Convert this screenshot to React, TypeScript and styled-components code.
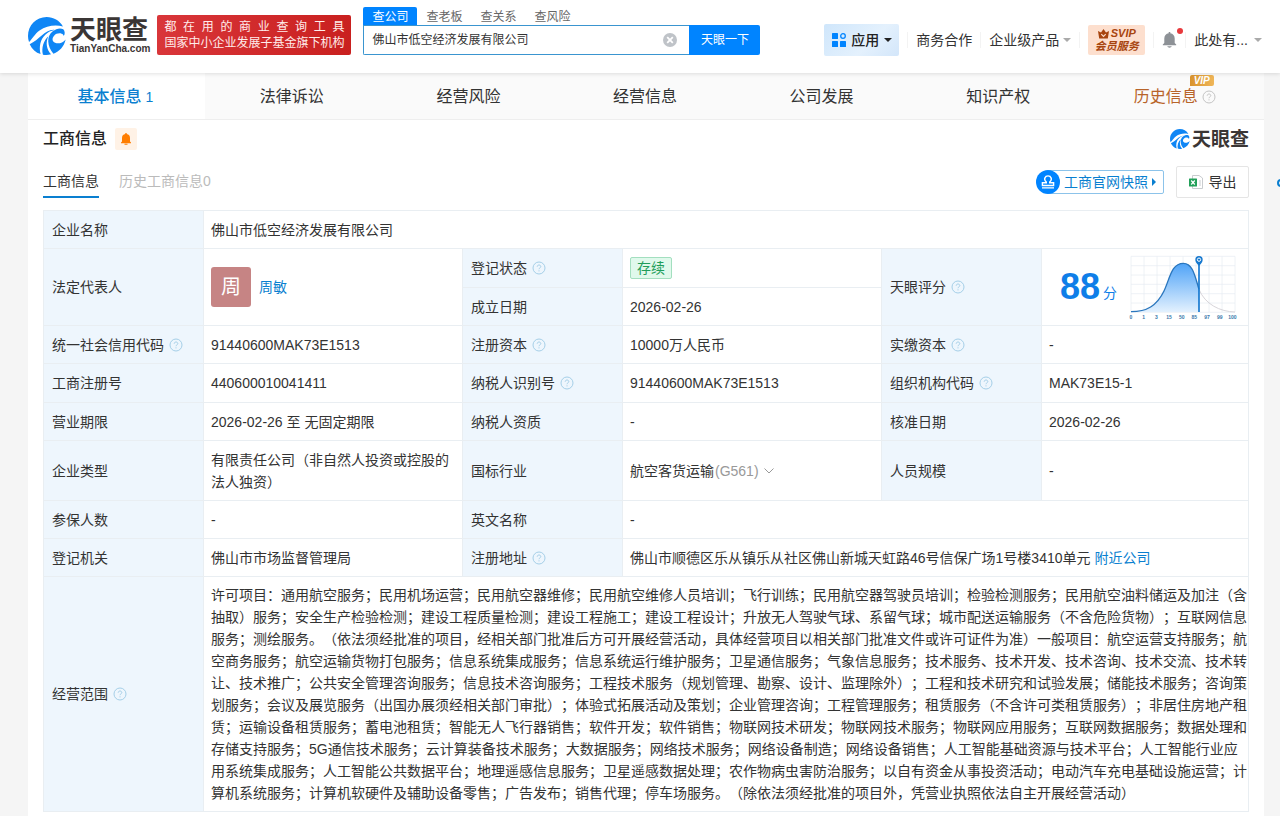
import React, { useState } from "react";
import styled, { createGlobalStyle } from "styled-components";

const blue = "#0084ff";
const link = "#0a7fd0";
const line = "#e9eef2";

const GlobalStyle = createGlobalStyle`
  * { box-sizing: border-box; }
  body {
    margin: 0;
    background: #f5f5f5;
    color: #333;
    font-family: "Liberation Sans", "Noto Sans CJK SC", sans-serif;
    font-size: 14px;
    line-height: 22px;
    text-spacing-trim: space-all;
  }
  button, input { font: inherit; color: inherit; }
  button { border: 0; padding: 0; background: none; cursor: pointer; }
  a { color: inherit; text-decoration: none; }
  svg { display: block; flex: none; }
`;

const Page = styled.div`
  display: flex;
  flex-direction: column;
  min-height: 100vh;
`;

/* ---------- header ---------- */

const Header = styled.header`
  position: relative;
  z-index: 2;
  display: flex;
  align-items: flex-start;
  height: 73px;
  padding: 0 18px 0 28px;
  background: #fff;
  box-shadow: 0 1px 4px rgba(0, 0, 0, 0.12);
`;

const Brand = styled.a`
  display: flex;
  align-items: center;
  gap: 4px;
  margin-top: 17px;
`;

const BrandText = styled.span`
  display: flex;
  flex-direction: column;
  color: #3b3635;
`;

const BrandName = styled.strong<{ $size: number }>`
  font-size: ${(p) => p.$size}px;
  line-height: ${(p) => p.$size}px;
  font-weight: 700;
`;

const BrandDomain = styled.span`
  font-size: 10px;
  line-height: 12px;
  font-weight: 700;
`;

const Slogan = styled.div`
  width: 194px;
  height: 40px;
  margin: 15px 12px 0 7px;
  padding: 4px 7px;
  border-radius: 2px;
  background: linear-gradient(90deg, #d9363a, #c9201f);
  color: #ffeceb;
  font-size: 12px;
  line-height: 16px;
  white-space: nowrap;
`;

const SloganLine = styled.div`
  text-align: justify;
  text-align-last: justify;
`;

const Search = styled.form`
  display: flex;
  flex-direction: column;
  flex: 0 1 397px;
  margin-top: 7px;
`;

const SearchTabs = styled.div`
  display: flex;
`;

const SearchTab = styled.button<{ $active?: boolean }>`
  height: 18px;
  padding: 0 9px;
  border-radius: 2px 2px 0 0;
  background: ${(p) => (p.$active ? blue : "transparent")};
  color: ${(p) => (p.$active ? "#fff" : "#666")};
  font-size: 12px;
  line-height: 20px;
`;

const SearchRow = styled.div`
  display: flex;
  height: 30px;
`;

const SearchField = styled.label`
  display: flex;
  flex: 1;
  align-items: center;
  min-width: 0;
  padding: 0 12px 0 8px;
  border: 1px solid #3a95d0;
  border-right: 0;
  border-radius: 0 0 0 2px;
`;

const SearchInput = styled.input`
  flex: 1;
  min-width: 0;
  padding: 0;
  border: 0;
  outline: 0;
  background: none;
  font-size: 12px;
`;

const SearchButton = styled.button`
  width: 71px;
  border-radius: 0 2px 2px 0;
  background: ${blue};
  color: #fff;
  font-size: 12px;
`;

const Nav = styled.nav`
  display: flex;
  align-items: center;
  gap: 8px;
  height: 32px;
  margin: 24px 0 0 auto;
  white-space: nowrap;
`;

const NavRule = styled.span`
  width: 1px;
  height: 16px;
  background: #f3f3f3;
`;

const NavButton = styled.button<{ $gap: number }>`
  display: flex;
  align-items: center;
  gap: ${(p) => p.$gap}px;
`;

const AppsButton = styled.button`
  display: flex;
  align-items: center;
  gap: 5px;
  width: 75px;
  height: 32px;
  padding: 0 8px;
  border-radius: 2px;
  background: linear-gradient(135deg, #cfe6fb, #e4f1fd 60%, #d3e6fa);
  color: #222;
  font-weight: 500;
`;

const Svip = styled.a`
  display: flex;
  flex-direction: column;
  align-items: center;
  width: 57px;
  height: 30px;
  padding-top: 2px;
  border-radius: 2px;
  background: #fddfce;
  color: #a8450f;
  font-size: 11px;
  line-height: 13px;
  font-weight: 700;
  font-style: italic;
`;

const SvipTop = styled.span`
  display: flex;
  align-items: center;
  gap: 2px;
`;

const Notice = styled.button`
  position: relative;
`;

const NoticeDot = styled.span`
  position: absolute;
  top: -4px;
  right: -6px;
  width: 6px;
  height: 6px;
  border-radius: 50%;
  background: #e8393c;
`;

/* ---------- company body ---------- */

const Main = styled.main`
  display: flex;
  flex: 1;
  flex-direction: column;
  margin: 0 16px 0 28px;
  background: #fff;
`;

const Tabs = styled.nav`
  display: grid;
  grid-template-columns: repeat(7, 1fr);
  height: 47px;
  border-bottom: 1px solid #eee;
  background: #fafafa;
`;

const Tab = styled.a<{ $active?: boolean; $gold?: boolean }>`
  display: flex;
  align-items: center;
  justify-content: center;
  gap: 4px;
  padding: 2px 2px 0 0;
  background: ${(p) => (p.$active ? "#fff" : "transparent")};
  color: ${(p) => (p.$active ? link : p.$gold ? "#b8642a" : "#333")};
  font-size: 16px;
  font-weight: ${(p) => (p.$active ? 500 : 400)};
`;

const TabCount = styled.span`
  font-size: 14px;
  font-weight: 400;
`;

const TabLabel = styled.span`
  position: relative;
`;

const VipFlag = styled.span`
  position: absolute;
  top: -11px;
  right: -16px;
  width: 24px;
  height: 11px;
  border-radius: 2px 2px 2px 0;
  background: linear-gradient(90deg, #d9932d, #efb659);
  color: #fff;
  font-size: 10px;
  line-height: 11px;
  font-weight: 700;
  font-style: italic;
  text-align: center;
`;

const Panel = styled.section`
  padding: 0 15px;
`;

const TitleRow = styled.div`
  display: flex;
  align-items: center;
  height: 38px;
`;

const Title = styled.h2`
  margin: 0;
  font-size: 16px;
  font-weight: 500;
  color: #222;
`;

const Follow = styled.button`
  display: grid;
  place-items: center;
  width: 22px;
  height: 22px;
  margin-left: 8px;
  border-radius: 2px;
  background: #fff2e6;
`;

const PanelBrand = styled.span`
  display: flex;
  align-items: center;
  gap: 2px;
  margin-left: auto;
  color: #3b3635;
`;

const ToolRow = styled.div`
  display: flex;
  align-items: center;
  height: 32px;
  margin: 8px 0 12px;
`;

const SubTab = styled.button<{ $active?: boolean }>`
  height: 32px;
  margin-right: 20px;
  border-bottom: 2px solid ${(p) => (p.$active ? link : "transparent")};
  color: ${(p) => (p.$active ? "#333" : "#bbb")};
`;

const Snapshot = styled.button`
  display: flex;
  align-items: center;
  height: 24px;
  margin: 0 12px 0 auto;
  color: ${link};
`;

const SnapshotIcon = styled.span`
  z-index: 1;
  display: grid;
  place-items: center;
  width: 24px;
  height: 24px;
  margin-right: -12px;
  border-radius: 50%;
  background: ${blue};
`;

const SnapshotLabel = styled.span`
  display: flex;
  align-items: center;
  gap: 4px;
  height: 24px;
  padding: 0 7px 0 15px;
  border: 1px solid #8cc3ea;
  border-radius: 2px;
`;

const Export = styled.button`
  display: flex;
  align-items: center;
  justify-content: center;
  gap: 6px;
  width: 73px;
  height: 32px;
  border: 1px solid #e5e5e5;
  border-radius: 2px;
`;

const InfoTable = styled.table`
  width: 100%;
  border-collapse: collapse;
  table-layout: fixed;
`;

const LabelCol = styled.col`
  width: 160px;
`;

const ScoreCol = styled.col`
  width: 207px;
`;

const Row = styled.tr<{ $h: number }>`
  height: ${(p) => p.$h}px;
`;

const Label = styled.th`
  padding: 7px 8px;
  border: 1px solid ${line};
  background: #eef6fd;
  font-weight: 400;
  text-align: left;
`;

const LabelInner = styled.span`
  display: flex;
  align-items: center;
  gap: 5px;
`;

const Value = styled.td<{ $flush?: boolean }>`
  padding: ${(p) => (p.$flush ? "0" : "7px 0 7px 7px")};
  border: 1px solid ${line};
`;

const Person = styled.a`
  display: flex;
  align-items: center;
  gap: 8px;
  color: ${link};
`;

const Avatar = styled.span`
  width: 40px;
  height: 40px;
  border-radius: 3px;
  background: #c68484;
  color: #fff;
  font-size: 20px;
  line-height: 40px;
  text-align: center;
`;

const Status = styled.span`
  display: block;
  width: 42px;
  height: 22px;
  border: 1px solid #a3dfbf;
  border-radius: 2px;
  background: #e0f9ec;
  color: #1f9d5b;
  line-height: 20px;
  text-align: center;
`;

const Industry = styled.span`
  display: flex;
  align-items: center;
`;

const Code = styled.span`
  margin: 0 5px 0 1px;
  color: #999;
`;

const Nearby = styled.a`
  margin-left: 4px;
  color: ${link};
`;

const Score = styled.div`
  display: flex;
  align-items: center;
  padding-left: 18px;
  color: #0f7ee8;
`;

const ScoreNumber = styled.strong`
  margin-right: 3px;
  font-size: 36px;
  line-height: 40px;
`;

const ScoreUnit = styled.span`
  margin: 12px 11px 0 0;
`;

const SideHandle = styled.button`
  position: fixed;
  top: 179px;
  right: -5px;
  width: 8px;
  height: 8px;
  border: 2px solid ${link};
  border-radius: 50%;
`;

/* ---------- drawings ---------- */

const Swirl = ({ size }: { size: number }) => (
  <svg width={size} height={size} viewBox="0 0 112 112" aria-hidden="true">
    <path
      fill="#0f86f5"
      d="M103 28C93 10 75 0 55 0 24 0 0 25 0 56c0 6 1 12 3 18 9-8 17-24 31-34C54 26 80 22 103 28Z"
    />
    <path
      fill="#0f86f5"
      d="M5 80c7 15 18 25 32 29-5-21-1-43 14-57 8-8 17-12 27-14C49 36 34 68 5 80Z"
    />
    <path fill="#0f86f5" d="M44 111c8 1 16 1 24-1-13-14-17-33-8-53-14 13-21 34-16 54Z" />
    <path
      fill="#0f86f5"
      d="M75 108c18-7 31-21 36-42-9 11-22 14-31 10-9-4-10-14-3-21 5-6 14-8 22-6 4 1 6 4 6 7 5-5 4-15-1-20-9-5-21-2-31 6-19 15-17 44 2 66Z"
    />
  </svg>
);

const Caret = ({ color }: { color: string }) => (
  <svg width="8" height="5" viewBox="0 0 8 5" aria-hidden="true">
    <path d="M0 0h8L4 4z" fill={color} />
  </svg>
);

const Help = ({ color = "#a5cfe8" }: { color?: string }) => (
  <svg width="14" height="14" viewBox="0 0 14 14" fill="none" stroke={color} aria-hidden="true">
    <circle cx="7" cy="7" r="6" />
    <path d="M5.2 5.7c0-1 .8-1.7 1.8-1.7s1.8.7 1.8 1.6c0 1.2-1.8 1.3-1.8 2.6M7 9.3v1.1" />
  </svg>
);

const ClearIcon = () => (
  <svg width="14" height="14" viewBox="0 0 14 14" aria-hidden="true">
    <circle cx="7" cy="7" r="7" fill="#bfc3c8" />
    <path d="M4.2 4.2l5.6 5.6M9.8 4.2L4.2 9.8" stroke="#fff" strokeWidth="1.8" />
  </svg>
);

const AppsIcon = () => (
  <svg width="14" height="14" viewBox="0 0 14 14" fill={blue} aria-hidden="true">
    <rect width="6" height="6" rx=".6" />
    <rect y="8" width="6" height="6" rx=".6" />
    <rect x="8" y="8" width="6" height="6" rx=".6" />
    <circle cx="11" cy="3" r="2.3" fill="none" stroke={blue} strokeWidth="1.3" />
  </svg>
);

const Crown = () => (
  <svg width="11" height="10" viewBox="0 0 11 10" aria-hidden="true">
    <path d="M0 2l3 1.6L5.5 0 8 3.6 11 2 9.8 9.5H1.2z" fill="#a8450f" />
    <path d="M3.3 5.2l2.2 2.2 2.2-2.2" fill="none" stroke="#fddfce" strokeWidth="1.2" />
  </svg>
);

const NavBell = () => (
  <svg width="15" height="16" viewBox="0 0 15 16" fill="#8d9196" aria-hidden="true">
    <path d="M6.7 0h1.6v1.3C11 1.7 12.7 3.7 12.7 6.5V11l1.5 1.5v.7H.8v-.7L2.3 11V6.500C2.300 3.700 4 1.700 6.700 1.300z" />
    <path d="M5.300 14.300h4.400c-.4 1-1.200 1.400-2.200 1.400s-1.800-.4-2.200-1.400z" />
  </svg>
);

const FollowBell = () => (
  <svg width="10" height="12" viewBox="0 0 10 12" fill="#ff7d00" aria-hidden="true">
    <path d="M4.300 0h1.400v.9C7.900 1.200 9 2.800 9 5v3.500l1 1v.7H0v-.7l1-1V5C1 2.800 2.100 1.200 4.300.9zM3.500 10.700h3v1h-3z" />
  </svg>
);

const Stamp = () => (
  <svg width="14" height="14" viewBox="0 0 14 14" fill="none" stroke="#fff" strokeWidth="1.400" aria-hidden="true">
    <path d="M5.300 7C3.900 5.800 3.300 4.300 3.900 2.900 4.400 1.500 5.600.9 7 .9s2.600.6 3.100 2C10.700 4.300 10.100 5.800 8.700 7v.8h3.900v2.700H1.400V7.800h3.900zM1 12.900h12" />
  </svg>
);

const ExcelIcon = () => (
  <svg width="14" height="14" viewBox="0 0 14 14" aria-hidden="true">
    <path d="M3.500.5H10L13.500 3v10.500h-10z" fill="#fff" stroke="#c9cccf" />
    <path d="M10 6h2M10 8h2M10 10h2" stroke="#c9cccf" />
    <rect y="3.500" width="8" height="8" rx=".5" fill="#22a05a" />
    <path d="M2.200 5.500l3.600 4M5.800 5.500l-3.600 4" stroke="#fff" strokeWidth="1.200" />
  </svg>
);

const Chevron = () => (
  <svg width="10" height="6" viewBox="0 0 10 6" fill="none" stroke="#999" aria-hidden="true">
    <path d="M.5.500L5 5 9.500.500" />
  </svg>
);

const ticks = ["0", "1", "3", "15", "50", "85", "97", "99", "100"];

const ScoreChart = () => (
  <svg width="111" height="68" viewBox="24 6 333 204" role="img" aria-label="天眼评分分布">
    <defs>
      <linearGradient id="bell" x1="0" y1="0" x2="0" y2="1">
        <stop offset="0" stopColor="#4fa3f7" />
        <stop offset="1" stopColor="#e3f1fe" />
      </linearGradient>
    </defs>
    <g stroke="#e6ecf2" strokeWidth="2">
      {ticks.map((t, i) => (
        <path key={t} d={`M${33 + i * 39} 16V183`} />
      ))}
      {[0, 1, 2, 3, 4, 5, 6].map((i) => (
        <path key={i} d={`M33 ${16 + i * 28}H345`} />
      ))}
    </g>
    <path d="M33 182C80 182 110 165 132 120 150 82 154 37 190 37c28 0 34 35 47 78v68H33z" fill="url(#bell)" />
    <path d="M237 115C255 160 300 182 345 183" fill="none" stroke="#d8d5da" strokeWidth="3" />
    <path
      d="M33 182C80 182 110 165 132 120 150 82 154 37 190 37c28 0 34 35 47 78"
      fill="none"
      stroke="#2a76bd"
      strokeWidth="4"
    />
    <path d="M237 34V183" stroke="#1578cf" strokeWidth="5" />
    <path d="M237 44c-7-7-11-11-11-18a11 11 0 0 1 22 0c0 7-4 11-11 18z" fill="#1578cf" />
    <circle cx="237" cy="26" r="5" fill="#1578cf" stroke="#fff" strokeWidth="3" />
    <g fill="#3a78ab" fontSize="15" fontWeight="700" textAnchor="middle">
      {ticks.map((t, i) => (
        <text key={t} x={33 + i * 38} y="204">
          {t}
        </text>
      ))}
    </g>
  </svg>
);

/* ---------- content ---------- */

const Field = ({ children, help, rowSpan }: { children: string; help?: boolean; rowSpan?: number }) => (
  <Label scope="row" rowSpan={rowSpan}>
    <LabelInner>
      {children}
      {help && <Help />}
    </LabelInner>
  </Label>
);

const scopeText =
  "许可项目：通用航空服务；民用机场运营；民用航空器维修；民用航空维修人员培训；飞行训练；民用航空器驾驶员培训；检验检测服务；民用航空油料储运及加注（含抽取）服务；安全生产检验检测；建设工程质量检测；建设工程施工；建设工程设计；升放无人驾驶气球、系留气球；城市配送运输服务（不含危险货物）；互联网信息服务；测绘服务。（依法须经批准的项目，经相关部门批准后方可开展经营活动，具体经营项目以相关部门批准文件或许可证件为准）一般项目：航空运营支持服务；航空商务服务；航空运输货物打包服务；信息系统集成服务；信息系统运行维护服务；卫星通信服务；气象信息服务；技术服务、技术开发、技术咨询、技术交流、技术转让、技术推广；公共安全管理咨询服务；信息技术咨询服务；工程技术服务（规划管理、勘察、设计、监理除外）；工程和技术研究和试验发展；储能技术服务；咨询策划服务；会议及展览服务（出国办展须经相关部门审批）；体验式拓展活动及策划；企业管理咨询；工程管理服务；租赁服务（不含许可类租赁服务）；非居住房地产租赁；运输设备租赁服务；蓄电池租赁；智能无人飞行器销售；软件开发；软件销售；物联网技术研发；物联网技术服务；物联网应用服务；互联网数据服务；数据处理和存储支持服务；5G通信技术服务；云计算装备技术服务；大数据服务；网络技术服务；网络设备制造；网络设备销售；人工智能基础资源与技术平台；人工智能行业应用系统集成服务；人工智能公共数据平台；地理遥感信息服务；卫星遥感数据处理；农作物病虫害防治服务；以自有资金从事投资活动；电动汽车充电基础设施运营；计算机系统服务；计算机软硬件及辅助设备零售；广告发布；销售代理；停车场服务。（除依法须经批准的项目外，凭营业执照依法自主开展经营活动）";

export default function App() {
  const [query, setQuery] = useState("佛山市低空经济发展有限公司");

  return (
    <Page>
      <GlobalStyle />
      <Header>
        <Brand href="#" aria-label="天眼查">
          <Swirl size={38} />
          <BrandText>
            <BrandName $size={26}>天眼查</BrandName>
            <BrandDomain>TianYanCha.com</BrandDomain>
          </BrandText>
        </Brand>
        <Slogan>
          <SloganLine>都在用的商业查询工具</SloganLine>
          <SloganLine>国家中小企业发展子基金旗下机构</SloganLine>
        </Slogan>
        <Search onSubmit={(e) => e.preventDefault()}>
          <SearchTabs>
            <SearchTab type="button" $active>查公司</SearchTab>
            <SearchTab type="button">查老板</SearchTab>
            <SearchTab type="button">查关系</SearchTab>
            <SearchTab type="button">查风险</SearchTab>
          </SearchTabs>
          <SearchRow>
            <SearchField>
              <SearchInput aria-label="搜索公司" value={query} onChange={(e) => setQuery(e.target.value)} />
              <button type="button" aria-label="清空" onClick={() => setQuery("")}>
                <ClearIcon />
              </button>
            </SearchField>
            <SearchButton type="submit">天眼一下</SearchButton>
          </SearchRow>
        </Search>
        <Nav>
          <AppsButton>
            <AppsIcon />
            应用
            <Caret color="#222" />
          </AppsButton>
          <NavRule />
          <a href="#">商务合作</a>
          <NavRule />
          <NavButton $gap={4}>
            企业级产品
            <Caret color="#aaa" />
          </NavButton>
          <NavRule />
          <Svip href="#">
            <SvipTop>
              <Crown />
              SVIP
            </SvipTop>
            会员服务
          </Svip>
          <NavRule />
          <Notice aria-label="消息">
            <NavBell />
            <NoticeDot />
          </Notice>
          <NavRule />
          <NavButton $gap={6}>
            此处有...
            <Caret color="#aaa" />
          </NavButton>
        </Nav>
      </Header>

      <Main>
        <Tabs>
          <Tab href="#" $active>
            基本信息
            <TabCount>1</TabCount>
          </Tab>
          <Tab href="#">法律诉讼</Tab>
          <Tab href="#">经营风险</Tab>
          <Tab href="#">经营信息</Tab>
          <Tab href="#">公司发展</Tab>
          <Tab href="#">知识产权</Tab>
          <Tab href="#" $gold>
            <TabLabel>
              历史信息
              <VipFlag>VIP</VipFlag>
            </TabLabel>
            <Help color="#c4c4c4" />
          </Tab>
        </Tabs>

        <Panel>
          <TitleRow>
            <Title>工商信息</Title>
            <Follow aria-label="关注">
              <FollowBell />
            </Follow>
            <PanelBrand>
              <Swirl size={20} />
              <BrandName as="span" $size={19}>天眼查</BrandName>
            </PanelBrand>
          </TitleRow>

          <ToolRow>
            <SubTab $active>工商信息</SubTab>
            <SubTab>历史工商信息0</SubTab>
            <Snapshot>
              <SnapshotIcon>
                <Stamp />
              </SnapshotIcon>
              <SnapshotLabel>
                工商官网快照
                <svg width="4" height="8" viewBox="0 0 4 8" aria-hidden="true">
                  <path d="M0 0l4 4-4 4z" fill={link} />
                </svg>
              </SnapshotLabel>
            </Snapshot>
            <Export>
              <ExcelIcon />
              导出
            </Export>
          </ToolRow>

          <InfoTable>
            <colgroup>
              <LabelCol />
              <col />
              <LabelCol />
              <col />
              <LabelCol />
              <ScoreCol />
            </colgroup>
            <tbody>
              <Row $h={38}>
                <Field>企业名称</Field>
                <Value colSpan={5}>佛山市低空经济发展有限公司</Value>
              </Row>
              <Row $h={39}>
                <Field rowSpan={2}>法定代表人</Field>
                <Value rowSpan={2}>
                  <Person href="#">
                    <Avatar>周</Avatar>
                    周敏
                  </Person>
                </Value>
                <Field help>登记状态</Field>
                <Value>
                  <Status>存续</Status>
                </Value>
                <Field help rowSpan={2}>天眼评分</Field>
                <Value rowSpan={2} $flush>
                  <Score>
                    <ScoreNumber>88</ScoreNumber>
                    <ScoreUnit>分</ScoreUnit>
                    <ScoreChart />
                  </Score>
                </Value>
              </Row>
              <Row $h={38}>
                <Field>成立日期</Field>
                <Value>2026-02-26</Value>
              </Row>
              <Row $h={38}>
                <Field help>统一社会信用代码</Field>
                <Value>91440600MAK73E1513</Value>
                <Field help>注册资本</Field>
                <Value>10000万人民币</Value>
                <Field help>实缴资本</Field>
                <Value>-</Value>
              </Row>
              <Row $h={39}>
                <Field>工商注册号</Field>
                <Value>440600010041411</Value>
                <Field help>纳税人识别号</Field>
                <Value>91440600MAK73E1513</Value>
                <Field help>组织机构代码</Field>
                <Value>MAK73E15-1</Value>
              </Row>
              <Row $h={38}>
                <Field>营业期限</Field>
                <Value>2026-02-26 至 无固定期限</Value>
                <Field>纳税人资质</Field>
                <Value>-</Value>
                <Field>核准日期</Field>
                <Value>2026-02-26</Value>
              </Row>
              <Row $h={60}>
                <Field>企业类型</Field>
                <Value>有限责任公司（非自然人投资或控股的法人独资）</Value>
                <Field>国标行业</Field>
                <Value>
                  <Industry>
                    航空客货运输
                    <Code>(G561)</Code>
                    <Chevron />
                  </Industry>
                </Value>
                <Field>人员规模</Field>
                <Value>-</Value>
              </Row>
              <Row $h={38}>
                <Field>参保人数</Field>
                <Value>-</Value>
                <Field>英文名称</Field>
                <Value colSpan={3}>-</Value>
              </Row>
              <Row $h={38}>
                <Field>登记机关</Field>
                <Value>佛山市市场监督管理局</Value>
                <Field help>注册地址</Field>
                <Value colSpan={3}>
                  佛山市顺德区乐从镇乐从社区佛山新城天虹路46号信保广场1号楼3410单元
                  <Nearby href="#">附近公司</Nearby>
                </Value>
              </Row>
              <Row $h={235}>
                <Field help>经营范围</Field>
                <Value colSpan={5}>{scopeText}</Value>
              </Row>
            </tbody>
          </InfoTable>
        </Panel>
      </Main>
      <SideHandle aria-label="展开侧栏" />
    </Page>
  );
}
